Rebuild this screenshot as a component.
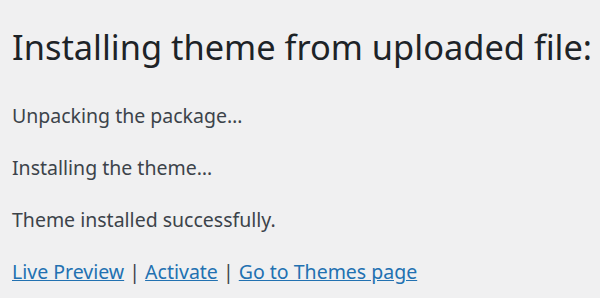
import React from "react";

export default function App() {
  return (
    <div className="h-[298px] w-[600px] overflow-hidden bg-[#f0f0f1] px-[12px] font-['Noto_Sans',sans-serif] text-[#3c434a]">
      <h1 className="pt-[23px] text-[34.4px] leading-[48px] font-normal whitespace-nowrap text-[#1d2327]">
        Installing theme from uploaded file:
      </h1>
      <p className="mt-[29px] text-[19.5px] leading-[31px]">Unpacking the package…</p>
      <p className="mt-[21px] text-[19.5px] leading-[31px]">Installing the theme…</p>
      <p className="mt-[21px] text-[19.5px] leading-[31px]">Theme installed successfully.</p>
      <p className="mt-[21px] text-[19.5px] leading-[31px]">
        <a href="#" className="text-[#2271b1] underline">Live Preview</a> |{" "}
        <a href="#" className="text-[#2271b1] underline">Activate</a> |{" "}
        <a href="#" className="text-[#2271b1] underline">Go to Themes page</a>
      </p>
    </div>
  );
}
